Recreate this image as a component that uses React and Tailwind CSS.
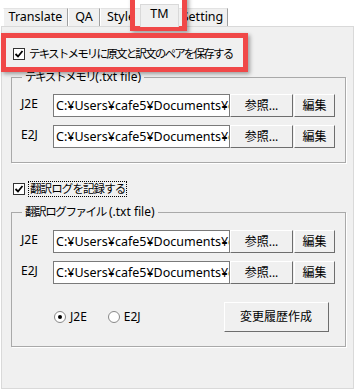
function CheckBox() {
  return (
    <span className="flex h-[12px] w-[12px] shrink-0 items-center justify-center border border-[#333] bg-white">
      <svg width="10" height="10" viewBox="0 0 10 10">
        <path d="M1.5 5 L4 7.5 L8.5 2" fill="none" stroke="#000" strokeWidth="1.8" />
      </svg>
    </span>
  );
}

function Radio({ checked }) {
  return (
    <span className="flex h-[12px] w-[12px] items-center justify-center rounded-full border border-[#888] bg-white">
      {checked && <span className="h-[4px] w-[4px] rounded-full bg-black" />}
    </span>
  );
}

function PathRow({ label }) {
  return (
    <div className="flex items-start">
      <div className="w-[32px] pt-[3px] text-[12px] leading-[14px]">{label}</div>
      <div className="h-[23px] w-[177px] overflow-hidden whitespace-nowrap border border-[#7a7a7a] bg-white pl-[2px] text-[12.5px] leading-[21px]">
        C:¥Users¥cafe5¥Documents¥cafe5¥TM
      </div>
      <button className="h-[23px] w-[63px] border border-t-white border-l-white border-r-[#6d6d6d] border-b-[#6d6d6d] bg-[#f0f0f0] text-[12px] leading-[20px]">
        参照...
      </button>
      <button className="ml-[1px] h-[23px] w-[41px] border border-t-white border-l-white border-r-[#6d6d6d] border-b-[#6d6d6d] bg-[#f0f0f0] text-[12px] leading-[20px]">
        編集
      </button>
    </div>
  );
}

function Tab({ children, w, active }) {
  if (active) {
    return (
      <div
        className="relative z-10 -mx-[2px] mb-[-1px] flex h-[23px] items-center justify-center border border-b-0 border-[#d9d9d9] bg-[#f0f0f0] pb-[3px]"
        style={{ width: w }}
      >
        {children}
      </div>
    );
  }
  return (
    <div
      className="flex h-[18px] items-center justify-center border-t border-l border-r border-t-[#e3e3e3] border-l-white border-r-[#a0a0a0] bg-[#f0f0f0]"
      style={{ width: w }}
    >
      {children}
    </div>
  );
}

export default function App() {
  return (
    <div
      className="relative h-[389px] w-[355px] overflow-hidden bg-white text-black"
      style={{ fontFamily: '"Noto Sans", "Noto Sans CJK JP", sans-serif' }}
    >
      <div className="flex h-[26px] items-end pl-[3px] text-[12.5px]">
        <Tab w={65}>Translate</Tab>
        <Tab w={32}>QA</Tab>
        <Tab w={42}>Style</Tab>
        <Tab w={39} active>TM</Tab>
        <Tab w={51}>Setting</Tab>
      </div>

      <div className="ml-[1px] h-[363px] w-[353px] border border-[#d9d9d9] bg-[#f0f0f0] pl-[9px] text-[12px]">
        <div className="mt-[21px] ml-[2px] flex h-[12px] items-center gap-[4px]">
          <CheckBox />
          <span className="text-[11.5px] leading-[14px] tracking-[-1.8px]">テキストメモリに原文と訳文のペアを保存する</span>
        </div>

        <fieldset className="mt-[10px] h-[93px] w-[335px] border border-[#a9a9a9] pl-[9px] shadow-[1px_1px_0_white]">
          <legend className="ml-[1px] px-[3px] text-[12px] leading-[14px]">
            <span className="text-[11.5px] tracking-[-1.4px]">テキストメモリ</span>(.txt file)
          </legend>
          <div className="mt-[10px] flex flex-col gap-[8px]">
            <PathRow label="J2E" />
            <PathRow label="E2J" />
          </div>
        </fieldset>

        <div className="mt-[20px] ml-[2px] flex h-[12px] items-center gap-[3px]">
          <CheckBox />
          <span className="border border-dotted border-black px-[1px] text-[11.5px] leading-[14px] tracking-[-0.9px]">翻訳ログを記録する</span>
        </div>

        <fieldset className="mt-[10px] h-[142px] w-[335px] border border-[#a9a9a9] pl-[9px] shadow-[1px_1px_0_white]">
          <legend className="ml-[1px] px-[3px] text-[12px] leading-[14px]">
            <span className="text-[11.5px] tracking-[-1.4px]">翻訳ログファイル</span> (.txt file)
          </legend>
          <div className="mt-[11px] flex flex-col gap-[8px]">
            <PathRow label="J2E" />
            <PathRow label="E2J" />
          </div>
          <div className="mt-[18px] flex items-center">
            <div className="ml-[33px] flex items-center gap-[4px]">
              <Radio checked />
              <span>J2E</span>
            </div>
            <div className="ml-[21px] flex items-center gap-[4px]">
              <Radio />
              <span>E2J</span>
            </div>
            <button className="ml-[83px] h-[30px] w-[105px] border border-t-white border-l-white border-r-[#6d6d6d] border-b-[#6d6d6d] bg-[#f0f0f0] text-[12px]">
              変更履歴作成
            </button>
          </div>
        </fieldset>
      </div>

      <div className="absolute left-[130px] top-[-5px] h-[36px] w-[57px] border-[5px] border-[#f04848] shadow-[2px_2px_4px_rgba(0,0,0,0.35)]" />
      <div className="absolute left-[1px] top-[33px] h-[39px] w-[247px] border-[5px] border-[#f04848] shadow-[2px_2px_4px_rgba(0,0,0,0.35)]" />
    </div>
  );
}
